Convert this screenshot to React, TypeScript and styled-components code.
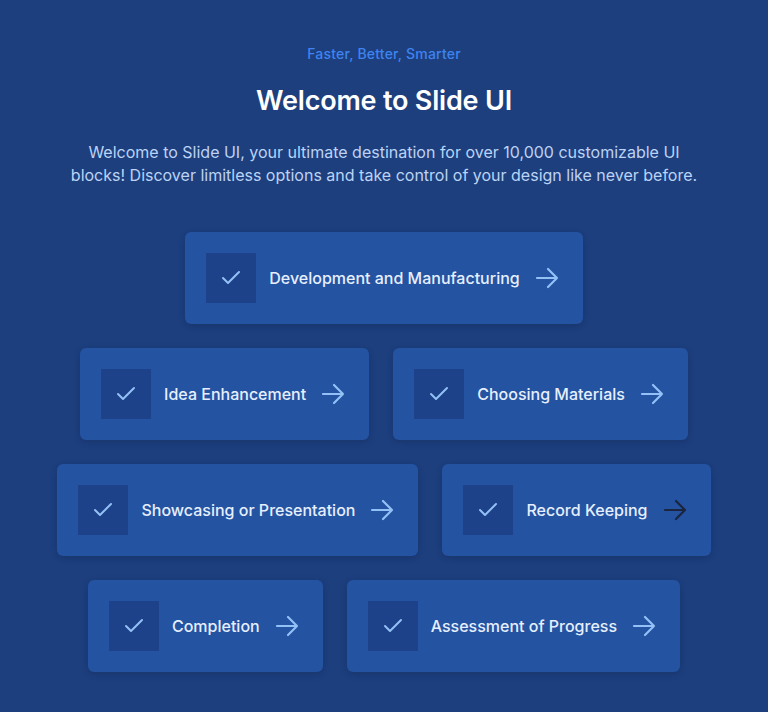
import React from "react";
import styled, { createGlobalStyle } from "styled-components";

const Global = createGlobalStyle`
  html, body { margin: 0; padding: 0; background: #1d3f7e; }
  body { font-family: Inter, "Noto Sans", sans-serif; -webkit-font-smoothing: antialiased; }
  * { box-sizing: border-box; }
`;

const Page = styled.main`
  min-height: 712px;
  background: #1d3f7e;
  padding: 44px 24px 40px;
  display: flex;
  flex-direction: column;
  align-items: center;
`;

const Eyebrow = styled.p`
  margin: 0;
  font-size: 14px;
  line-height: 20px;
  color: #3d84f0;
  font-weight: 500;
  letter-spacing: 0.2px;
`;

const Title = styled.h1`
  margin: 19px 0 0;
  font-size: 27px;
  line-height: 36px;
  font-weight: 600;
  color: #ffffff;
  letter-spacing: -0.2px;
`;

const Lead = styled.p`
  margin: 22px 0 0;
  max-width: 640px;
  text-align: center;
  font-size: 16px;
  line-height: 23px;
  color: #bcd3f5;
`;

const Rows = styled.div`
  margin-top: 45px;
  display: flex;
  flex-direction: column;
  gap: 24px;
  align-items: center;
`;

const Row = styled.div`
  display: flex;
  justify-content: center;
  gap: 24px;
`;

const Card = styled.div`
  display: flex;
  align-items: center;
  height: 92px;
  padding: 21px 24px 21px 21px;
  background: #2453a2;
  border-radius: 6px;
  box-shadow: 0 2px 6px rgba(10, 25, 60, 0.25);
`;

const CheckBox = styled.div`
  width: 50px;
  height: 50px;
  flex: none;
  background: #1d428a;
  display: flex;
  align-items: center;
  justify-content: center;
`;

const Label = styled.span`
  margin-left: 13px;
  font-size: 16px;
  font-weight: 500;
  color: #e6effd;
  white-space: nowrap;
`;

const ArrowWrap = styled.span<{ $dark?: boolean }>`
  margin-left: 15px;
  display: flex;
  color: ${(p) => (p.$dark ? "#1b2540" : "#93c0f5")};
`;

const Check = () => (
  <svg width="24" height="24" viewBox="0 0 24 24" fill="none" stroke="#93c0f5" strokeWidth="2" strokeLinecap="round" strokeLinejoin="round">
    <path d="M20 6 9 17l-5-5" />
  </svg>
);

const Arrow = () => (
  <svg width="24" height="24" viewBox="0 0 24 24" fill="none" stroke="currentColor" strokeWidth="2.2" strokeLinecap="round" strokeLinejoin="round">
    <path d="M2 12h20M13 3l9 9-9 9" />
  </svg>
);

const rows: { label: string; dark?: boolean }[][] = [
  [{ label: "Development and Manufacturing" }],
  [{ label: "Idea Enhancement" }, { label: "Choosing Materials" }],
  [{ label: "Showcasing or Presentation" }, { label: "Record Keeping", dark: true }],
  [{ label: "Completion" }, { label: "Assessment of Progress" }],
];

export default function App() {
  return (
    <>
      <Global />
      <Page>
        <Eyebrow>Faster, Better, Smarter</Eyebrow>
        <Title>Welcome to Slide UI</Title>
        <Lead>
          Welcome to Slide UI, your ultimate destination for over 10,000 customizable UI blocks! Discover limitless options and take control of your design like never before.
        </Lead>
        <Rows>
          {rows.map((r, i) => (
            <Row key={i}>
              {r.map((c) => (
                <Card key={c.label}>
                  <CheckBox>
                    <Check />
                  </CheckBox>
                  <Label>{c.label}</Label>
                  <ArrowWrap $dark={c.dark}>
                    <Arrow />
                  </ArrowWrap>
                </Card>
              ))}
            </Row>
          ))}
        </Rows>
      </Page>
    </>
  );
}
